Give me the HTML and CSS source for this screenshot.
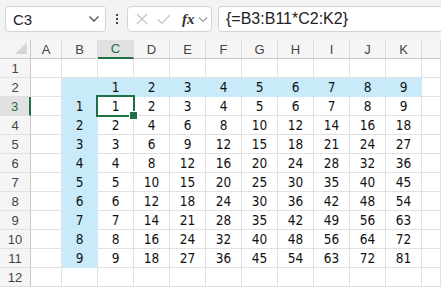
FILE: index.html
```html
<!DOCTYPE html>
<html lang="en">

<head>
    <meta charset="UTF-8">
    <meta name="viewport" content="width=device-width, initial-scale=1.0">
    <title>Sheet</title>
    <link rel="stylesheet" href="styles.css">
</head>

<body>
    <div class="formula-bar">
        <div class="name-box">
            <span class="name-text">C3</span>
            <svg class="chev" width="12" height="8" viewBox="0 0 12 8"><path d="M1.5 1.5 L6 6 L10.5 1.5" fill="none" stroke="#555" stroke-width="1.4"/></svg>
        </div>
        <div class="dots">
            <span></span><span></span><span></span>
        </div>
        <div class="fx-box">
            <svg width="12" height="12" viewBox="0 0 12 12"><path d="M1 1 L11 11 M11 1 L1 11" stroke="#c4c4c4" stroke-width="1.2"/></svg>
            <svg width="14" height="11" viewBox="0 0 14 11"><path d="M1 5.5 L5 9.5 L13 1" fill="none" stroke="#c4c4c4" stroke-width="1.2"/></svg>
            <span class="fx">fx</span>
            <svg width="10" height="7" viewBox="0 0 10 7"><path d="M1 1.5 L5 5.5 L9 1.5" fill="none" stroke="#9a9a9a" stroke-width="1.1"/></svg>
        </div>
        <div class="formula-input">{=B3:B11*C2:K2}</div>
    </div>

    <div class="sheet" id="sheet"></div>

    <script>
        const sheet = document.getElementById('sheet');
        const letters = ['A', 'B', 'C', 'D', 'E', 'F', 'G', 'H', 'I', 'J', 'K'];

        function addCell(cls, text) {
            const div = document.createElement('div');
            div.className = cls;
            div.textContent = text || '';
            sheet.appendChild(div);
            return div;
        }

        // header row
        const corner = addCell('corner');
        corner.innerHTML = '<svg width="12" height="12" viewBox="0 0 12 12"><path d="M12 0 L12 12 L0 12 Z" fill="#d6d6d6"/></svg>';
        letters.forEach(function (l) {
            addCell(l == 'C' ? 'hdr hdr-sel' : 'hdr', l);
        });
        addCell('hdr');

        for (let r = 1; r <= 12; r++) {
            addCell(r == 3 ? 'rh rh-sel' : 'rh', r);
            letters.forEach(function (l, i) {
                let cls = 'cell';
                let text = '';
                const col = i - 1; // B = 0, C = 1 ...
                if (r == 2 && col >= 0) {
                    cls += ' blue';
                    if (col > 0) text = col;
                }
                if (r >= 3 && r <= 11 && col >= 0) {
                    const n = r - 2;
                    if (col == 0) {
                        cls += ' blue';
                        text = n;
                    } else {
                        text = n * col;
                    }
                }
                if (r == 3 && l == 'C') cls += ' active';
                addCell(cls, text);
            });
            addCell('cell');
        }
    </script>
</body>

</html>
```

FILE: styles.css
```css
* {
    box-sizing: border-box;
}

body {
    margin: 0;
    padding: 0;
    background-color: #ffffff;
    font-family: 'Liberation Sans', Arial, sans-serif;
    overflow: hidden;
}

.formula-bar {
    display: flex;
    align-items: center;
    height: 40px;
    padding: 0 0 2px 5px;
    background-color: #f3f3f3;
}

.name-box {
    display: flex;
    align-items: center;
    justify-content: space-between;
    width: 101px;
    height: 26px;
    padding: 0 5px 0 7px;
    background: #fff;
    border: 1px solid #d4d4d4;
    border-radius: 4px;
    font-size: 15px;
    color: #222;
}

.dots {
    display: flex;
    flex-direction: column;
    gap: 2px;
    margin: 0 9px 0 10px;
}

.dots span {
    width: 2px;
    height: 2px;
    background: #444;
}

.fx-box {
    display: flex;
    align-items: center;
    width: 85px;
    height: 26px;
    padding: 0 3px 0 8px;
    gap: 9px;
    background: #fff;
    border: 1px solid #d4d4d4;
    border-radius: 4px;
}

.fx-box .fx {
    font-family: 'Liberation Serif', 'Times New Roman', serif;
    font-style: italic;
    font-weight: bold;
    font-size: 15px;
    color: #333;
    margin-left: 2px;
    margin-right: -6px;
}

.formula-input {
    flex: 1;
    height: 26px;
    margin-left: 6px;
    margin-right: -6px;
    padding: 3px 0 0 7px;
    background: #fff;
    border: 1px solid #d4d4d4;
    border-radius: 4px;
    font-size: 16px;
    color: #222;
}

.sheet {
    display: grid;
    grid-template-columns: 31px 31px repeat(10, 36px) 1fr;
    grid-template-rows: repeat(13, 19px);
}

.sheet > div {
    display: flex;
    align-items: center;
    justify-content: center;
    border-right: 1px solid #e1e1e1;
    border-bottom: 1px solid #e1e1e1;
}

.corner {
    background: #f5f5f5;
    justify-content: flex-end !important;
    align-items: flex-end !important;
    padding: 0 3px 4px 0;
    border-right-color: #c9c9c9 !important;
    border-bottom-color: #c9c9c9 !important;
}

.hdr {
    background: #f5f5f5;
    font-size: 13px;
    color: #444;
    border-right-color: #dcdcdc !important;
    border-bottom-color: #c9c9c9 !important;
}

.hdr-sel {
    background: #e1e1e1;
    color: #1e6c41;
    border-bottom: 2px solid #1e7145 !important;
}

.rh {
    background: #f5f5f5;
    font-size: 13px;
    color: #444;
    border-right-color: #c9c9c9 !important;
}

.rh-sel {
    background: #e1e1e1;
    color: #1e6c41;
    border-right: 2px solid #1e7145 !important;
}

.cell {
    font-family: 'DejaVu Sans Condensed', 'DejaVu Sans', sans-serif;
    font-size: 13.5px;
    color: #111;
}

.cell.blue {
    background: #c8eaf9;
    border-color: #c8eaf9;
}

.cell.active {
    position: relative;
}

.cell.active::before {
    content: '';
    position: absolute;
    top: -2px;
    left: -2px;
    right: -2px;
    bottom: -2px;
    border: 2px solid #1e7145;
}

.cell.active::after {
    content: '';
    position: absolute;
    right: -5px;
    bottom: -5px;
    width: 7px;
    height: 7px;
    background: #1e7145;
    border: 1px solid #fff;
}
```
